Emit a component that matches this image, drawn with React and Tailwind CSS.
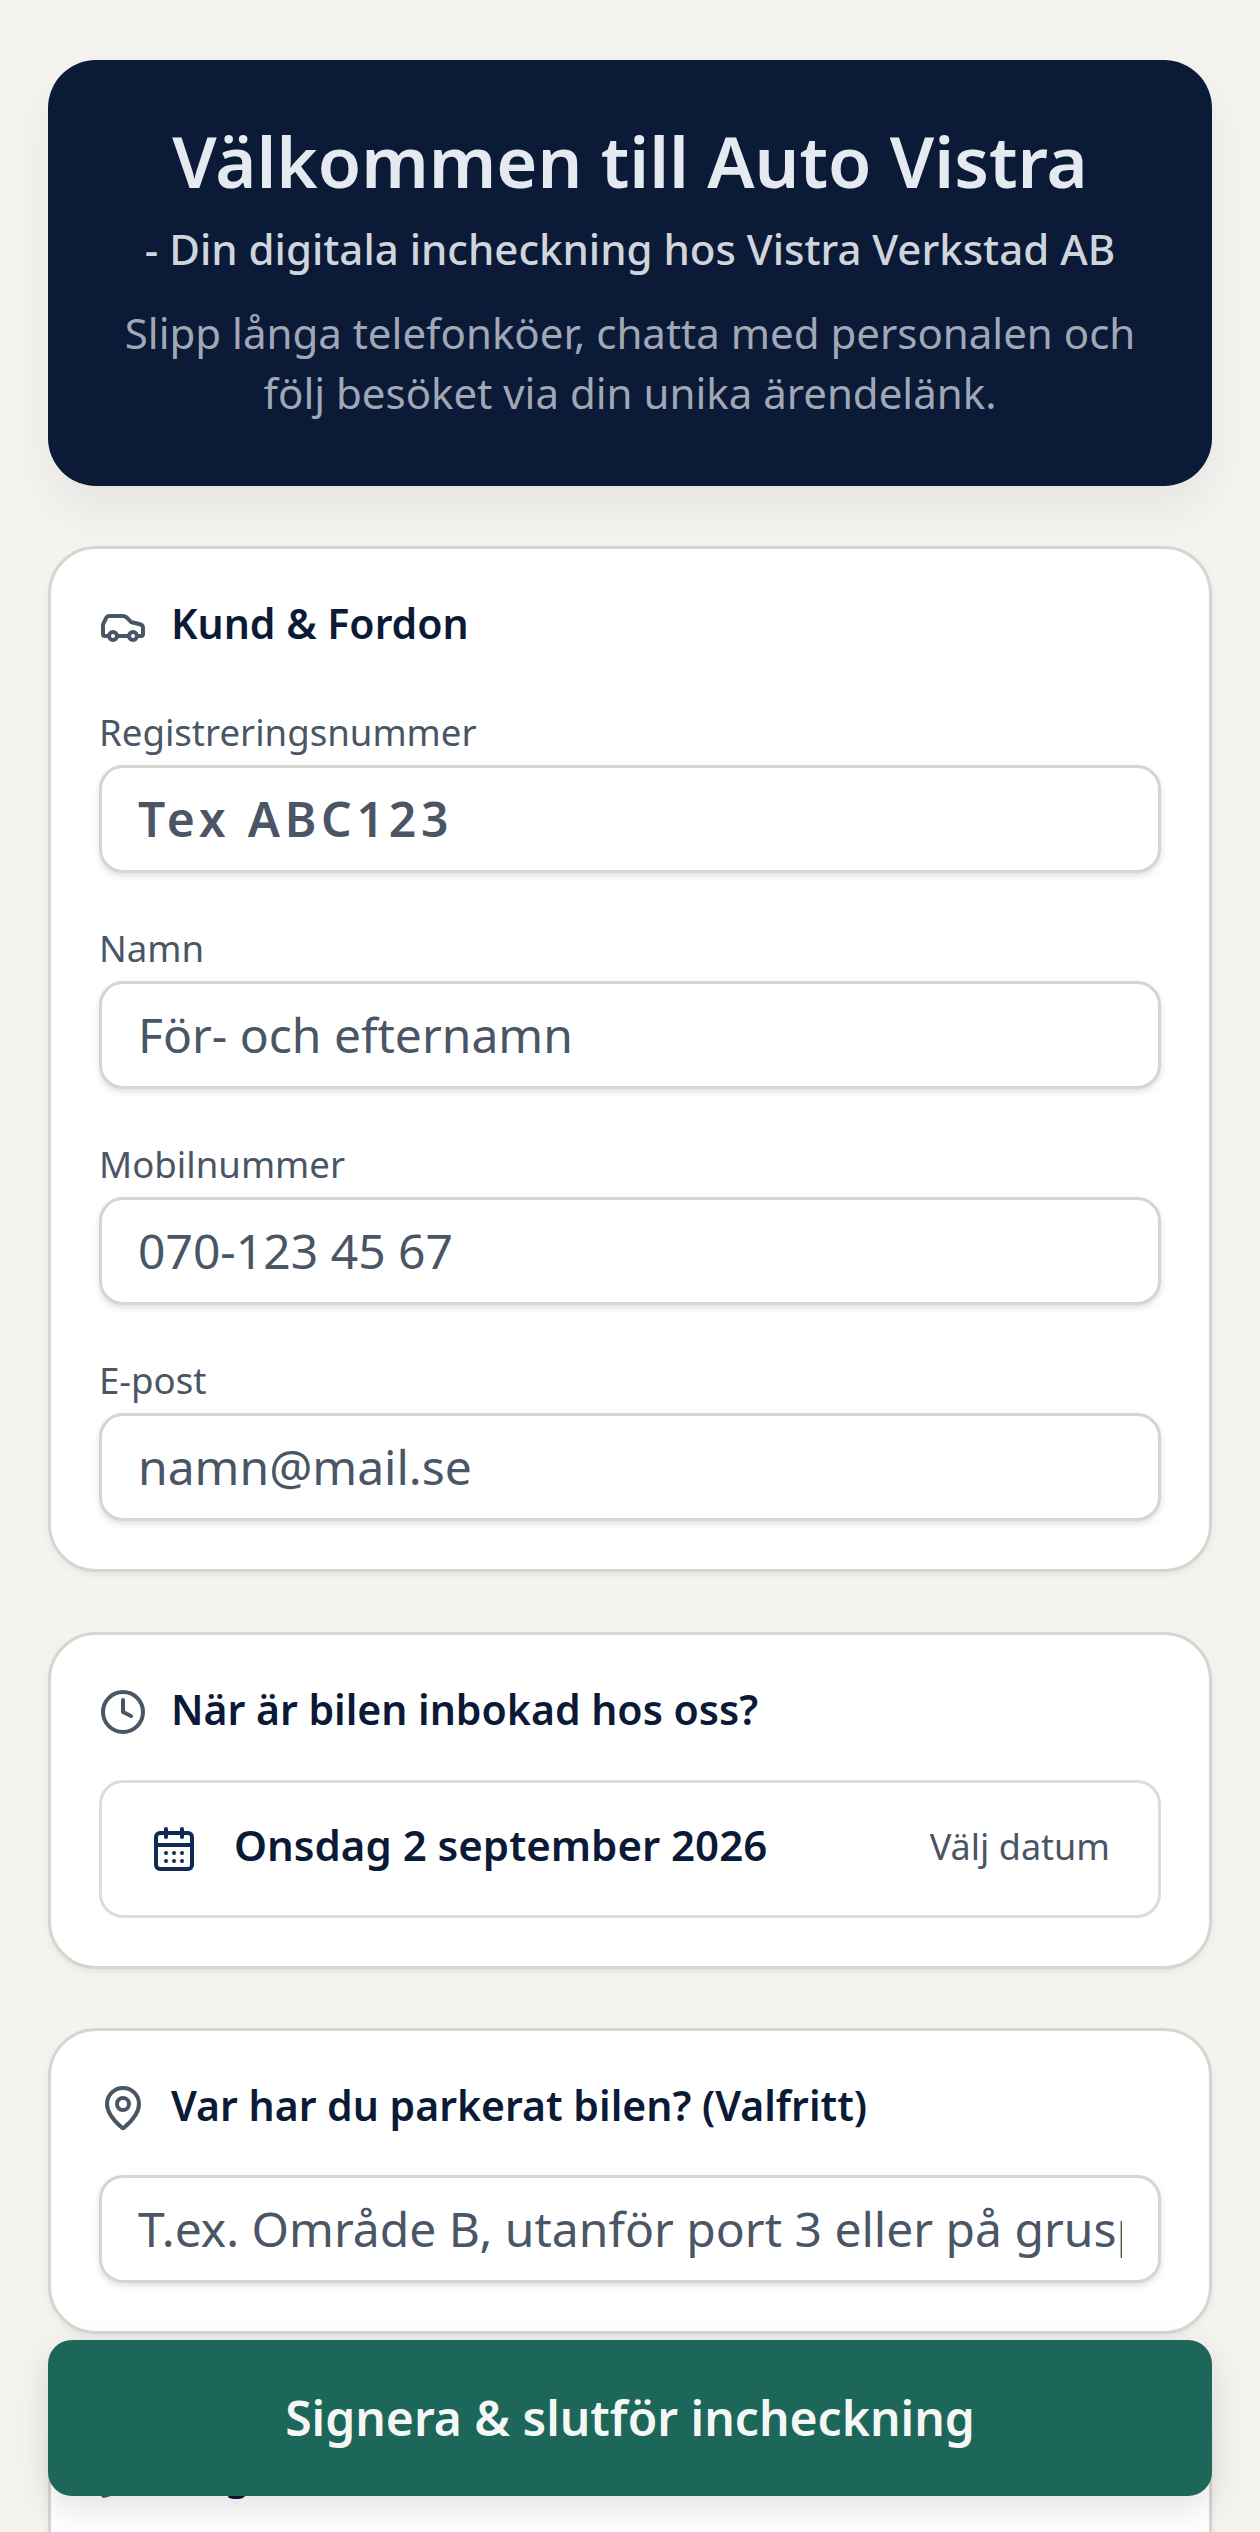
import { Car, Clock, CalendarDays, MapPin, Pencil } from 'lucide-react'

const noto = { fontFamily: '"Noto Sans", sans-serif' }

function Field({ label, placeholder, mono }) {
  return (
    <div className="flex flex-col">
      <label className="text-[36.6px] leading-[54px] text-[#4a5565]">{label}</label>
      <div className="mt-[6px] h-[108px] rounded-[24px] border-[3px] border-[#d6d5d0] bg-white shadow-[0_3px_6px_rgba(0,0,0,0.12)] px-[36px] flex items-center overflow-hidden">
        <span className={mono ? 'text-[48px] font-semibold tracking-[0.1em] text-[#4a5565] whitespace-nowrap' : 'text-[48px] text-[#4a5565] whitespace-nowrap'}>{placeholder}</span>
      </div>
    </div>
  )
}

function CardTitle({ icon: Icon, children }) {
  return (
    <div className="flex items-center gap-[24px] text-[#0b1a36]">
      <Icon size={48} strokeWidth={2} className="mt-[6px] text-[#4a5565] shrink-0" />
      <h2 className="text-[41px] font-semibold leading-[60px] whitespace-nowrap">{children}</h2>
    </div>
  )
}

const cardClass = 'rounded-[48px] border-[3px] border-[#d6d5d0] bg-white shadow-[0_3px_6px_rgba(0,0,0,0.06)] px-[48px] pt-[44px] pb-[48px]'

export default function App() {
  return (
    <div style={noto} className="relative h-[2532px] overflow-hidden bg-[#f4f3ef]">
      <div className="px-[48px] pt-[60px]">
        <header className="mb-[60px] h-[426px] rounded-[48px] bg-[#0b1a36] shadow-[0_24px_48px_rgba(0,0,0,0.06)] px-[60px] pt-[47px] text-center">
          <h1 className="text-[70.4px] leading-[108px] font-semibold text-[#e5e9f0]">Välkommen till Auto Vistra</h1>
          <p className="mt-[2px] text-[42px] leading-[63px] font-medium text-[#d0d5dd]">- Din digitala incheckning hos Vistra Verkstad AB</p>
          <p className="mt-[23px] text-[42px] leading-[60px] text-[#a0a8b6]">Slipp långa telefonköer, chatta med personalen och följ besöket via din unika ärendelänk.</p>
        </header>

        <div className="flex flex-col gap-[59px]">
          <section className={`${cardClass} mb-[1px]`}>
            <CardTitle icon={Car}>Kund &amp; Fordon</CardTitle>
            <div className="mt-[52px] flex flex-col gap-[48px]">
              <Field label="Registreringsnummer" placeholder="Tex ABC123" mono />
              <Field label="Namn" placeholder="För- och efternamn" />
              <Field label="Mobilnummer" placeholder="070-123 45 67" />
              <Field label="E-post" placeholder="namn@mail.se" />
            </div>
          </section>

          <section className={cardClass}>
            <CardTitle icon={Clock}>När är bilen inbokad hos oss?</CardTitle>
            <div className="mt-[41px] h-[138px] rounded-[24px] border-[3px] border-[#dddcd7] px-[48px] flex items-center justify-between">
              <div className="flex items-center gap-[36px]">
                <CalendarDays size={48} strokeWidth={2} className="text-[#0f2a55]" />
                <span className="-mt-[9px] text-[42px] font-semibold text-[#0b1a36]">Onsdag 2 september 2026</span>
              </div>
              <span className="-mt-[5px] text-[36px] text-[#4a5565]">Välj datum</span>
            </div>
          </section>

          <section className={cardClass}>
            <CardTitle icon={MapPin}>Var har du parkerat bilen? (Valfritt)</CardTitle>
            <div className="mt-[40px] h-[108px] rounded-[24px] border-[3px] border-[#d6d5d0] bg-white shadow-[0_3px_6px_rgba(0,0,0,0.12)] px-[36px] flex items-center">
              <span className="block overflow-hidden whitespace-nowrap text-[48px] text-[#4a5565]">T.ex. Område B, utanför port 3 eller på grusplanen</span>
            </div>
          </section>

          <section className={`${cardClass} mt-[3px] h-[400px]`}>
            <CardTitle icon={Pencil}>Ange orsaken till ditt besök, t.ex. service</CardTitle>
          </section>
        </div>
      </div>

      <div className="absolute left-[48px] right-[48px] bottom-[36px]">
        <button className="w-full h-[156px] rounded-[24px] bg-[#1c675a] text-[48px] font-semibold text-[#f4f7f5] shadow-[0_12px_36px_rgba(0,0,0,0.12)]">Signera &amp; slutför incheckning</button>
      </div>
    </div>
  )
}
